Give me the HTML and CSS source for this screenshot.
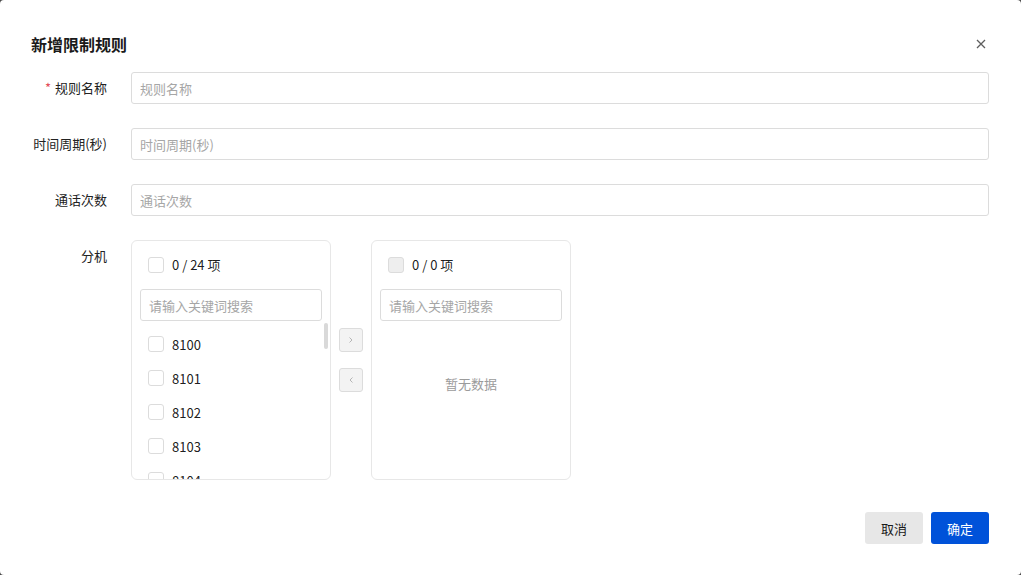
FILE: index.html
```html
<!DOCTYPE html>
<html lang="zh-CN">
<head>
<meta charset="utf-8" />
<title>新增限制规则</title>
<link rel="stylesheet" href="styles.css">
</head>
<body>
<div class="dialog">
  <div class="dialog-head">
    <div class="dialog-title">新增限制规则</div>
    <span class="dialog-close" aria-label="关闭">
      <svg viewBox="0 0 10 10" width="10" height="10"><path d="M1 1L9 9M9 1L1 9" stroke="#5e5e5e" stroke-width="1.3" fill="none"/></svg>
    </span>
  </div>

  <form class="form">
    <div class="form-item">
      <label class="form-label"><span class="req">*</span>规则名称</label>
      <div class="form-ctrl"><input class="input" placeholder="规则名称"></div>
    </div>
    <div class="form-item">
      <label class="form-label">时间周期(秒)</label>
      <div class="form-ctrl"><input class="input" placeholder="时间周期(秒)"></div>
    </div>
    <div class="form-item">
      <label class="form-label">通话次数</label>
      <div class="form-ctrl"><input class="input" placeholder="通话次数"></div>
    </div>
    <div class="form-item">
      <label class="form-label">分机</label>
      <div class="form-ctrl">
        <div class="transfer">
          <div class="tr-panel">
            <div class="tr-head"><span class="cb"></span><span>0 / 24 项</span></div>
            <div class="tr-search"><input class="input" placeholder="请输入关键词搜索"></div>
            <ul class="tr-list" id="srcList"></ul>
            <span class="tr-thumb"></span>
          </div>
          <div class="tr-ops">
            <span class="op-btn"><svg viewBox="0 0 6 10" width="6" height="10"><path d="M1.5 2.5L4 5L1.5 7.5" stroke="#b5b5b5" fill="none"/></svg></span>
            <span class="op-btn"><svg viewBox="0 0 6 10" width="6" height="10"><path d="M4.5 2.5L2 5L4.5 7.5" stroke="#b5b5b5" fill="none"/></svg></span>
          </div>
          <div class="tr-panel">
            <div class="tr-head"><span class="cb cb-off"></span><span>0 / 0 项</span></div>
            <div class="tr-search"><input class="input" placeholder="请输入关键词搜索"></div>
            <div class="tr-empty">暂无数据</div>
          </div>
        </div>
      </div>
    </div>
  </form>

  <div class="dialog-foot">
    <button class="btn btn-gray" type="button">取消</button>
    <button class="btn btn-blue" type="button">确定</button>
  </div>
</div>

<script>
  // 分机列表 8100 - 8123
  const list = document.getElementById('srcList');
  for(let i=0;i<24;i++){
    const li = document.createElement('li');
    li.innerHTML = '<span class="cb"></span><span>' + (8100+i) + '</span>';
    list.appendChild(li);
  }
</script>
</body>
</html>
```

FILE: styles.css
```css
html{background:#4a4a4a}
body{margin:0;width:1021px;height:575px;overflow:hidden;font-family:"Noto Sans CJK SC","Microsoft YaHei",sans-serif;font-size:13px;color:rgba(0,0,0,.9)}

/* Dialog */
.dialog{box-sizing:border-box;width:1021px;height:575px;background:#fff;border-radius:4px;padding:32px 32px 31px 31px;display:flex;flex-direction:column}
.dialog-head{display:flex;align-items:center;justify-content:space-between;height:24px}
.dialog-title{font-size:16px;font-weight:700;line-height:24px;color:#1a1a1a}
.dialog-close{display:flex;width:20px;height:20px;align-items:center;justify-content:center;margin-right:-2px}

/* Form */
.form{margin-top:16px;flex:1}
.form-item{display:flex;margin-bottom:24px}
.form-item:last-child{margin-bottom:0}
.form-label{box-sizing:border-box;width:100px;flex:none;padding-right:24px;display:flex;justify-content:flex-end;white-space:nowrap;line-height:32px;height:32px;color:#222}
.req{color:#e34d59;margin-right:4px}
.form-ctrl{flex:1;min-width:0}
.input{box-sizing:border-box;width:100%;height:32px;border:1px solid #dcdcdc;border-radius:3px;padding:0 8px;font:inherit;color:#222;outline:none;background:#fff}
.input::placeholder{color:#a6a6a6}

/* Transfer */
.transfer{display:flex;align-items:center}
.tr-panel{position:relative;box-sizing:border-box;width:200px;height:240px;border:1px solid #e7e7e7;border-radius:6px;display:flex;flex-direction:column;overflow:hidden}
.tr-head{display:flex;align-items:center;gap:8px;height:48px;flex:none;padding-left:16px;line-height:22px}
.tr-search{padding:0 8px;flex:none}
.tr-list{list-style:none;margin:0;padding:6px 0 0;overflow:hidden;flex:1}
.tr-list li{display:flex;align-items:center;gap:8px;height:34px;padding-left:16px}
.tr-thumb{position:absolute;right:2px;top:82px;width:4px;height:26px;border-radius:2px;background:#d9d9d9}
.tr-empty{padding-top:52px;text-align:center;line-height:22px;color:#9b9b9b}
.tr-ops{display:flex;flex-direction:column;gap:16px;margin:0 8px}
.op-btn{box-sizing:border-box;width:24px;height:24px;border:1px solid #dcdcdc;border-radius:3px;background:#f3f3f3;display:flex;align-items:center;justify-content:center}

.cb{box-sizing:border-box;width:16px;height:16px;flex:none;border:1px solid #dcdcdc;border-radius:3px;background:#fff}
.cb-off{background:#eeeeee}

/* Footer */
.dialog-foot{display:flex;justify-content:flex-end;gap:8px}
.btn{width:58px;height:32px;border:0;border-radius:3px;font:inherit;cursor:pointer}
.btn-gray{background:#e7e7e7;color:#1a1a1a}
.btn-blue{background:#0052d9;color:#fff}
```
